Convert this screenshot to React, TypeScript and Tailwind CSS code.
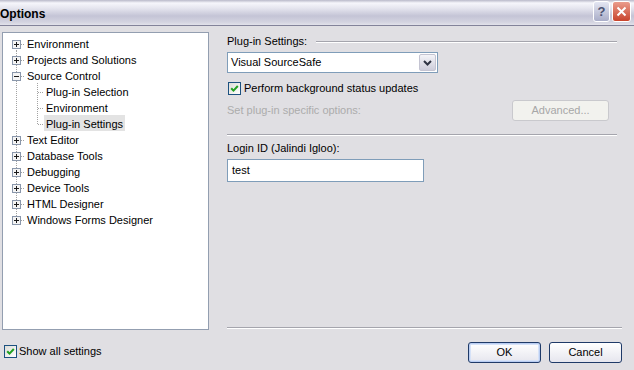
import React from 'react';

type Node = {
  label: string;
  kind: 'plus' | 'minus' | 'child';
  first?: boolean;
  last?: boolean;
  selected?: boolean;
};

const tree: Node[] = [
  { label: 'Environment', kind: 'plus', first: true },
  { label: 'Projects and Solutions', kind: 'plus' },
  { label: 'Source Control', kind: 'minus' },
  { label: 'Plug-in Selection', kind: 'child' },
  { label: 'Environment', kind: 'child' },
  { label: 'Plug-in Settings', kind: 'child', last: true, selected: true },
  { label: 'Text Editor', kind: 'plus' },
  { label: 'Database Tools', kind: 'plus' },
  { label: 'Debugging', kind: 'plus' },
  { label: 'Device Tools', kind: 'plus' },
  { label: 'HTML Designer', kind: 'plus' },
  { label: 'Windows Forms Designer', kind: 'plus', last: true },
];

const dot = { stroke: '#a3a3a3', strokeDasharray: '1 1', strokeWidth: 1 };

function Gutter({ node }: { node: Node }) {
  if (node.kind === 'child') {
    return (
      <svg width="41" height="16" className="shrink-0">
        <line x1="13.5" y1="0" x2="13.5" y2="16" {...dot} />
        <line x1="34.5" y1="0" x2="34.5" y2={node.last ? 9 : 16} {...dot} />
        <line x1="35" y1="9.5" x2="41" y2="9.5" {...dot} />
      </svg>
    );
  }
  return (
    <svg width="22" height="16" className="shrink-0">
      <line x1="13.5" y1={node.first ? 9 : 0} x2="13.5" y2={node.last ? 9 : 16} {...dot} />
      <line x1="18" y1="9.5" x2="22" y2="9.5" {...dot} />
      <rect x="9.5" y="5.5" width="8" height="8" fill="#f4f4f4" stroke="#8a97ab" />
      <line x1="11" y1="9.5" x2="16" y2="9.5" stroke="#1a1a1a" />
      {node.kind === 'plus' && <line x1="13.5" y1="7" x2="13.5" y2="12" stroke="#1a1a1a" />}
    </svg>
  );
}

function CheckBox() {
  return (
    <span className="w-[13px] h-[13px] shrink-0 border border-[#1c5180] bg-[linear-gradient(135deg,#dcdcd7,#ffffff)] flex items-center justify-center">
      <svg width="9" height="9" viewBox="0 0 9 9">
        <path d="M1.2 4.2 L3.5 6.6 L7.8 2" stroke="#21a121" strokeWidth="2" fill="none" />
      </svg>
    </span>
  );
}

function Separator({ className = '' }: { className?: string }) {
  return <div className={`h-[2px] border-t border-[#a5a5ad] border-b border-b-white ${className}`} />;
}

export default function App() {
  return (
    <div className="w-[634px] h-[370px] bg-[#e0dfe3] flex flex-col overflow-hidden text-[11px] text-black font-['Liberation_Sans',Arial,sans-serif]">
      {/* title bar */}
      <div className="h-[26px] shrink-0 flex justify-between border-b border-[#83839a] bg-[linear-gradient(to_bottom,#b9b9c9_0px,#f6f6fb_3px,#e6e6ef_8px,#c4c4d6_16px,#d3d3e0_22px,#e2e2ea_25px)]">
        <span className="font-bold text-[12px] leading-[14px] pt-[7px]">Options</span>
        <div className="flex gap-[2px] pr-[3px] pt-[1px]">
          <div className="w-[17px] h-[21px] rounded-[3px] border border-white bg-[linear-gradient(to_bottom,#e4e6f2,#a9adc8)] flex items-center justify-center text-[#4b5272] font-bold text-[13px]">
            ?
          </div>
          <div className="w-[19px] h-[21px] rounded-[3px] border border-white bg-[linear-gradient(to_bottom,#ea9c8c,#c8432c)] flex items-center justify-center">
            <svg width="11" height="11" viewBox="0 0 11 11">
              <path d="M1.5 1.5 L9.5 9.5 M9.5 1.5 L1.5 9.5" stroke="#ffffff" strokeWidth="2" />
            </svg>
          </div>
        </div>
      </div>

      {/* body */}
      <div className="h-[304px] shrink-0 flex">
        {/* tree */}
        <div className="ml-[2px] mt-[6px] w-[207px] h-[298px] border border-[#939eb0] bg-white pt-[2px]">
          {tree.map((node, i) => (
            <div key={i} className="h-4 flex">
              <Gutter node={node} />
              <span className={`h-4 px-[2px] pt-[3px] leading-[13px] whitespace-nowrap ${node.selected ? 'bg-[#e3e3e3]' : ''}`}>
                {node.label}
              </span>
            </div>
          ))}
        </div>

        {/* settings */}
        <div className="ml-[18px] w-[395px] flex flex-col pt-[9px]">
          <div className="h-[13px] flex items-center gap-[9px]">
            <span className="leading-[13px] whitespace-nowrap">Plug-in Settings:</span>
            <Separator className="flex-1 mr-[5px]" />
          </div>

          <div className="mt-[4px] w-[211px] h-[21px] border border-[#7f9db9] bg-white flex items-center justify-between">
            <span className="pl-[3px] leading-[13px]">Visual SourceSafe</span>
            <span className="w-[17px] h-[17px] mr-[1px] rounded-[2px] border border-[#c4c4d2] bg-[linear-gradient(to_bottom,#f4f4f8,#cdcddb)] flex items-center justify-center">
              <svg width="9" height="6" viewBox="0 0 9 6">
                <path d="M1 1 L4.5 4.5 L8 1" stroke="#2f3444" strokeWidth="2" fill="none" />
              </svg>
            </span>
          </div>

          <div className="mt-[9px] h-[13px] flex items-center gap-[3px] pl-[1px]">
            <CheckBox />
            <span className="leading-[13px] whitespace-nowrap">Perform background status updates</span>
          </div>

          <div className="mt-[5px] h-[21px] flex items-center justify-between pr-[13px]">
            <span className="text-[#acacac] leading-[13px]">Set plug-in specific options:</span>
            <span className="w-[97px] h-[21px] rounded-[3px] border border-[#c9c9cd] bg-[#f2f2ee] text-[#a7a7a7] flex items-center justify-center">
              Advanced...
            </span>
          </div>

          <Separator className="mt-[13px] mr-[5px]" />

          <div className="mt-[6px] h-[13px] leading-[13px]">Login ID (Jalindi Igloo):</div>
          <div className="mt-[4px] w-[197px] h-[23px] border border-[#7f9db9] bg-white flex items-center pl-[4px]">
            <span className="leading-[13px]">test</span>
          </div>

          <div className="flex-1" />
          <Separator className="mb-[1px]" />
        </div>
      </div>

      {/* bottom */}
      <div className="flex-1 flex justify-between">
        <div className="ml-[4px] mt-[15px] h-[13px] flex items-center gap-[2px]">
          <CheckBox />
          <span className="leading-[13px] whitespace-nowrap">Show all settings</span>
        </div>
        <div className="mt-[12px] mr-[12px] flex gap-[8px] h-[21px]">
          <button className="w-[73px] h-[21px] rounded-[3px] border border-[#1f3a68] bg-[linear-gradient(to_bottom,#ffffff,#e6e6ee)] shadow-[inset_0_0_0_1px_#b9cdf2,inset_0_0_0_2px_#d6e2f8] text-[11px] leading-[13px]">
            OK
          </button>
          <button className="w-[73px] h-[21px] rounded-[3px] border border-[#1f3a68] bg-[linear-gradient(to_bottom,#ffffff,#e6e6ee)] text-[11px] leading-[13px]">
            Cancel
          </button>
        </div>
      </div>
    </div>
  );
}
